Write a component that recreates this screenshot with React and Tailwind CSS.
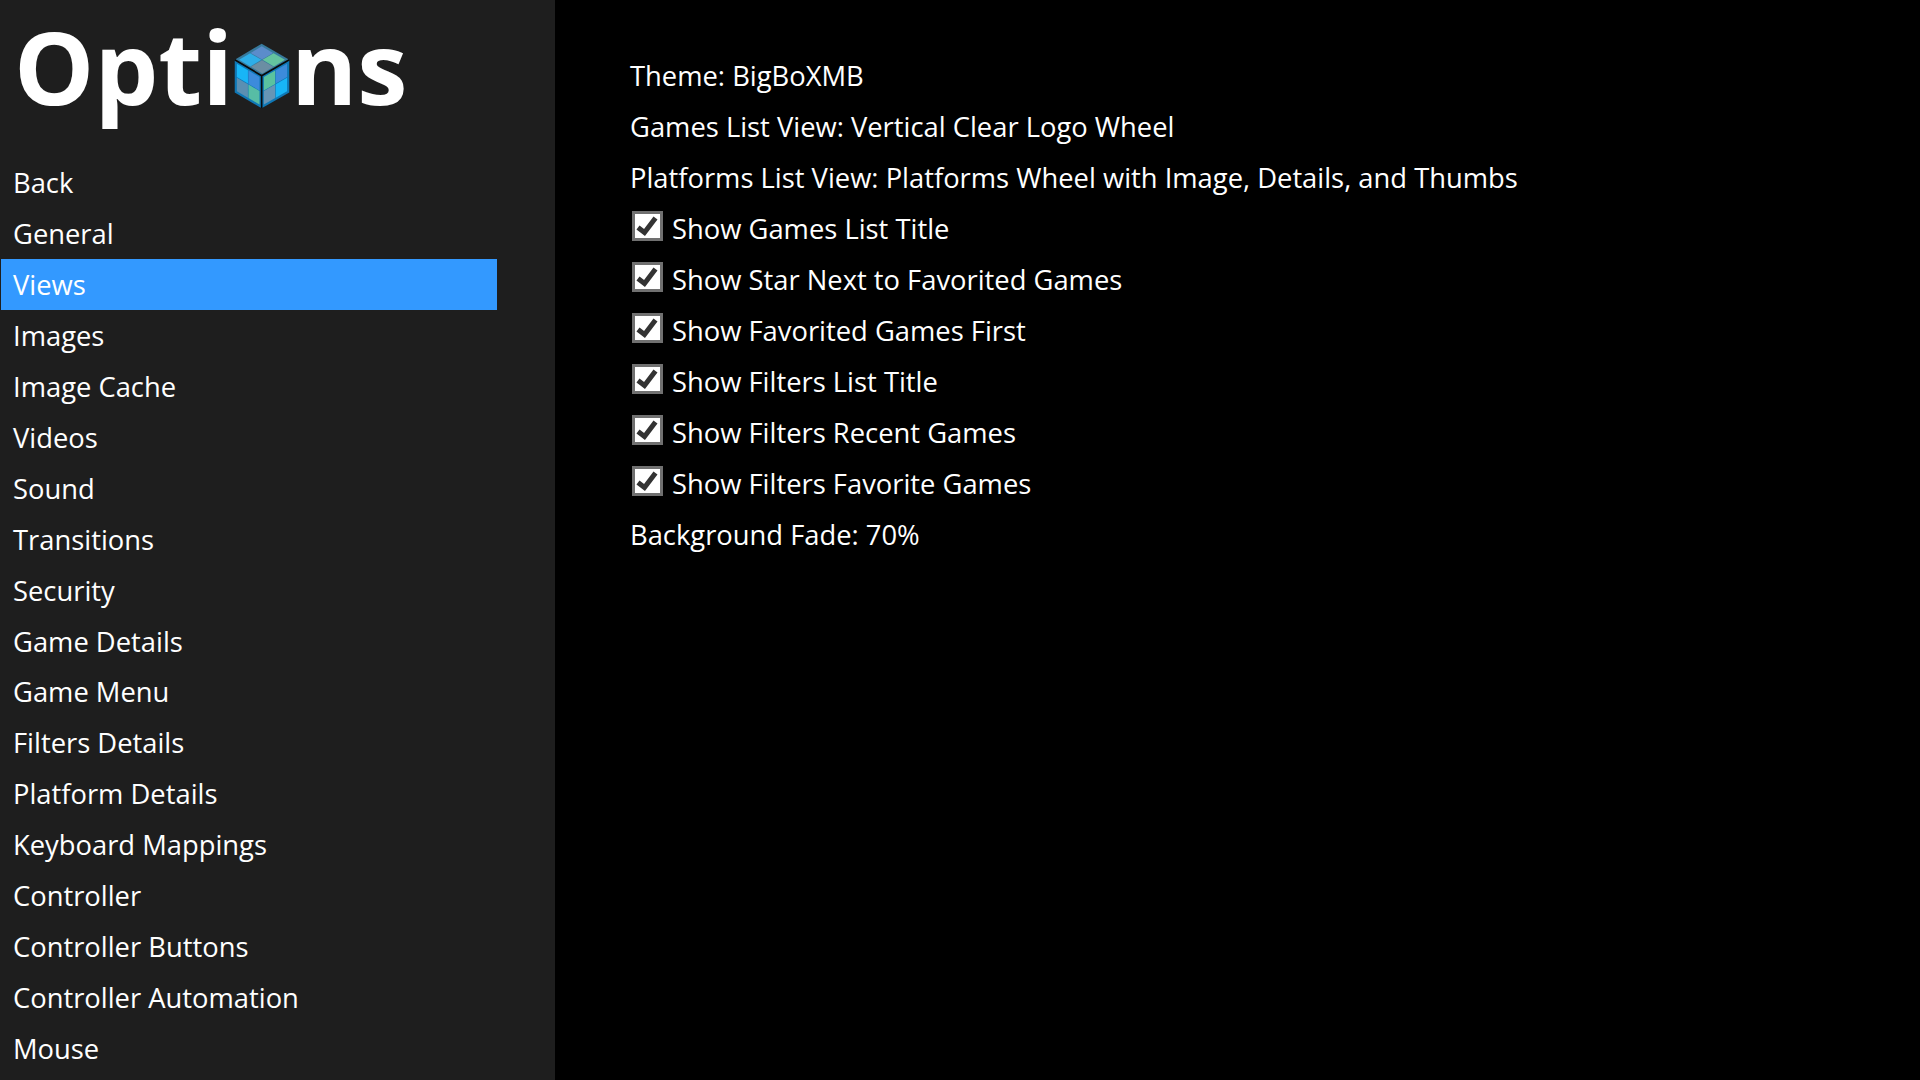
const menu = [
  "Back", "General", "Views", "Images", "Image Cache", "Videos", "Sound", "Transitions", "Security",
  "Game Details", "Game Menu", "Filters Details", "Platform Details", "Keyboard Mappings", "Controller",
  "Controller Buttons", "Controller Automation", "Mouse",
];

const settings = [
  { label: "Theme: BigBoXMB" },
  { label: "Games List View: Vertical Clear Logo Wheel" },
  { label: "Platforms List View: Platforms Wheel with Image, Details, and Thumbs" },
  { label: "Show Games List Title", checked: true },
  { label: "Show Star Next to Favorited Games", checked: true },
  { label: "Show Favorited Games First", checked: true },
  { label: "Show Filters List Title", checked: true },
  { label: "Show Filters Recent Games", checked: true },
  { label: "Show Filters Favorite Games", checked: true },
  { label: "Background Fade: 70%" },
];

// face is [origin, u vector, v vector], tiles are laid on a 2x2 grid inside it
function Face({ origin, u, v, colors }) {
  const pt = (a, b) => `${origin[0] + u[0] * a + v[0] * b},${origin[1] + u[1] * a + v[1] * b}`;
  const cells = [[0, 0], [1, 0], [0, 1], [1, 1]];
  return cells.map(([c, r], i) => {
    const a = 0.08 + c * 0.43;
    const b = 0.08 + r * 0.43;
    const s = 0.41;
    return (
      <polygon key={i} fill={colors[i]} points={`${pt(a, b)} ${pt(a + s, b)} ${pt(a + s, b + s)} ${pt(a, b + s)}`} />
    );
  });
}

function Cube() {
  return (
    <svg viewBox="48 38 166 196" className="w-[56px] h-[66px] shrink-0">
      <polygon points="130,40 212,88 130,135 50,88" fill="#37799c" />
      <polygon points="50,88 130,135 130,232 50,185" fill="#0f78b6" />
      <polygon points="212,88 130,135 130,232 212,185" fill="#0f78b6" />
      <Face origin={[130, 40]} u={[82, 48]} v={[-80, 48]} colors={["#5b8ccb", "#64c39f", "#2eaee8", "#6b8ea3"]} />
      <Face origin={[50, 88]} u={[80, 47]} v={[0, 97]} colors={["#18b5f6", "#3c8bdb", "#5b8fb2", "#57bda5"]} />
      <Face origin={[130, 135]} u={[82, -47]} v={[0, 97]} colors={["#5ac29f", "#3c8bdb", "#6795b5", "#18b5f6"]} />
      <path d="M50 88 L130 135 L212 88 M130 135 L130 232" fill="none" stroke="#0a0a0a" strokeWidth="5" />
    </svg>
  );
}

function Checkbox() {
  return (
    <span className="w-[31px] h-[30px] shrink-0 bg-white border-[3px] border-[#707070] flex items-center justify-center">
      <svg viewBox="0 0 25 24" className="w-[25px] h-[24px]">
        <path d="M3 13.5 L9.5 18.5 L20.5 4" fill="none" stroke="#333333" strokeWidth="5" />
      </svg>
    </span>
  );
}

export default function App() {
  return (
    <div className="flex h-[1080px] w-[1920px] overflow-hidden bg-black text-white font-['Open_Sans',sans-serif]">
      <aside className="w-[555px] shrink-0 bg-[#1e1e1e]">
        <h1 className="h-[157px] pl-[14px] pt-[1px] flex items-start text-[101px] leading-[130px] font-bold">
          <span>Opti</span>
          <span className="pt-[42px] ml-[1px] mr-[1px]"><Cube /></span>
          <span>ns</span>
        </h1>
        <nav className="flex flex-col">
          {menu.map((item, i) => (
            <div
              key={item}
              className={`h-[51px] ml-px w-[496px] pl-[12px] flex items-center text-[27.35px] ${i < 10 ? "" : "pb-[2px]"} ${item === "Views" ? "bg-[#3399ff]" : ""}`}
            >
              {item}
            </div>
          ))}
        </nav>
      </aside>
      <main className="flex-1 pl-[75px] pt-[51px]">
        {settings.map((row) => (
          <div key={row.label} className="h-[51px] pb-[2px] flex items-center text-[27.35px]">
            {row.checked && (
              <span className="ml-[2px] mr-[9px] -mt-[5px]"><Checkbox /></span>
            )}
            <span>{row.label}</span>
          </div>
        ))}
      </main>
    </div>
  );
}
